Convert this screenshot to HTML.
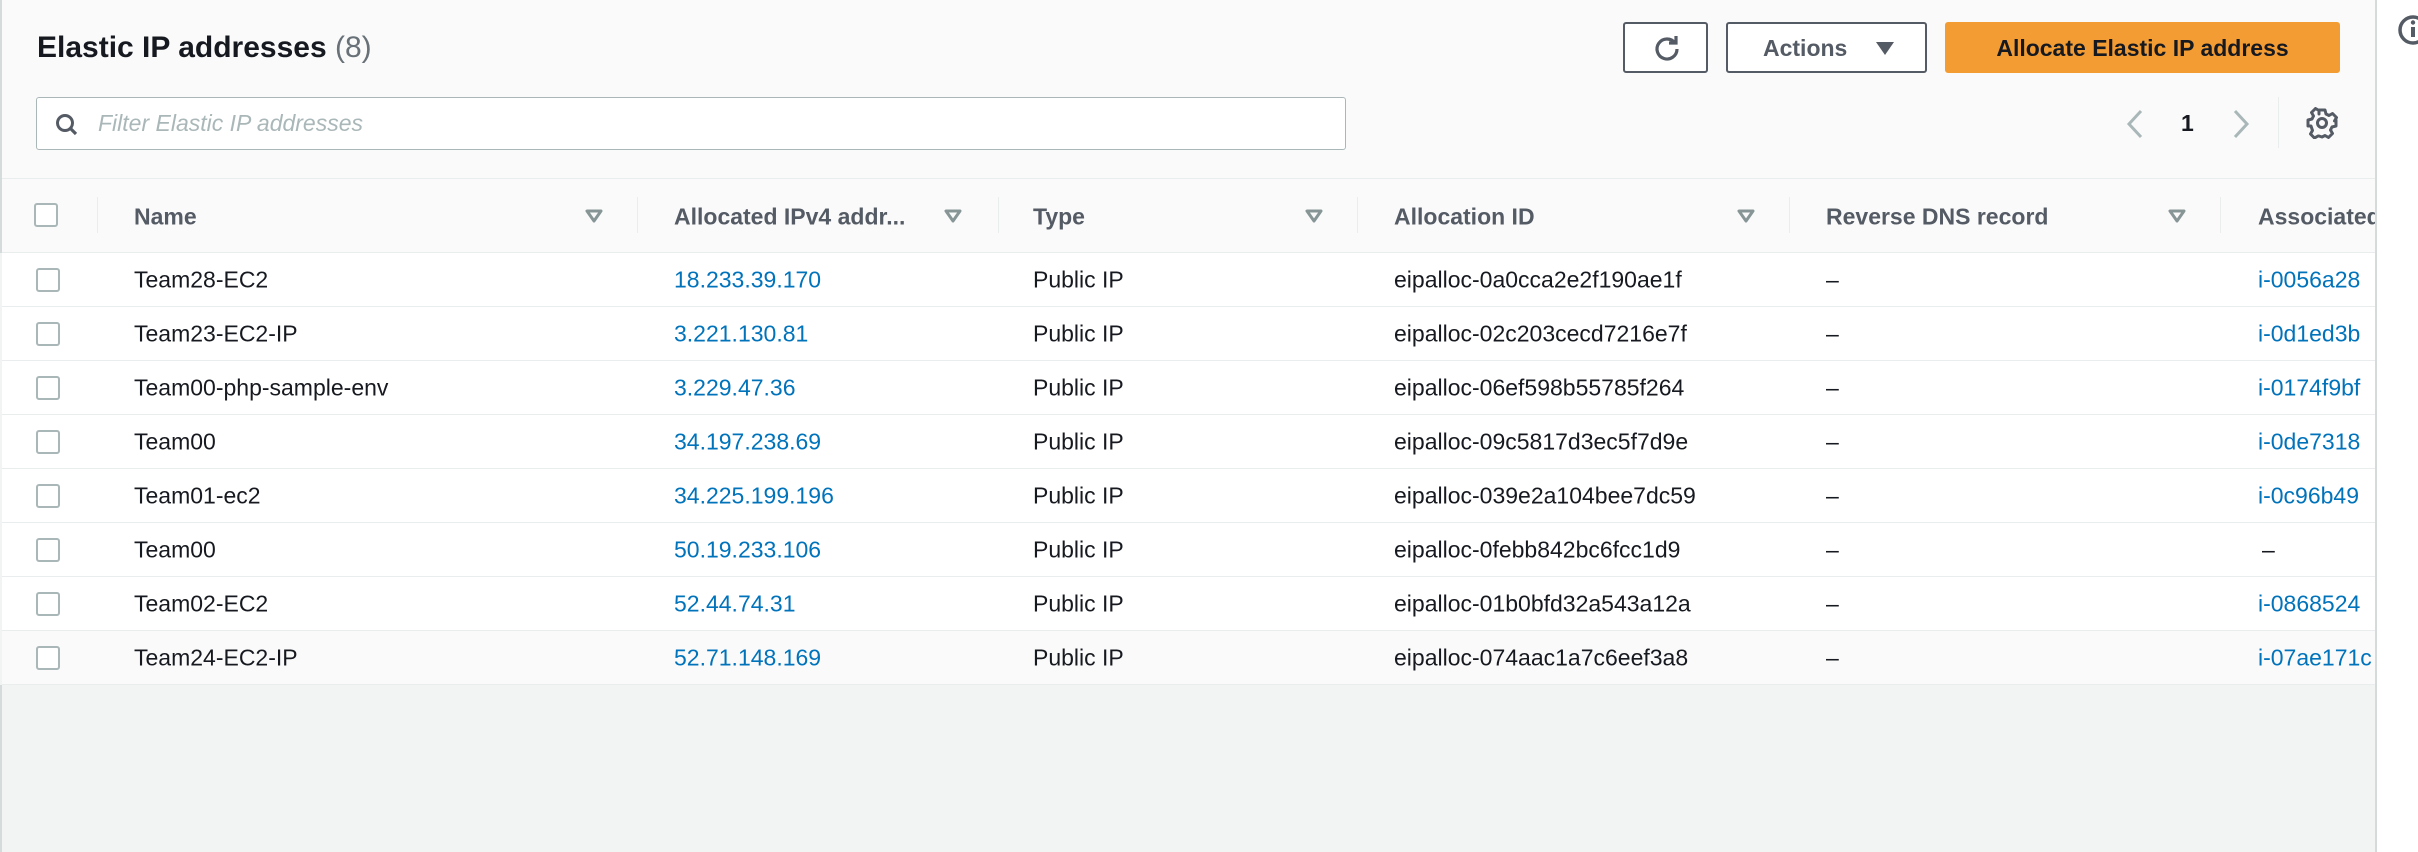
<!DOCTYPE html>
<html><head><meta charset="utf-8"><style>
*{margin:0;padding:0;box-sizing:border-box}
body{width:2418px;height:852px;overflow:hidden;background:#f2f3f3;font-family:"Liberation Sans",sans-serif;position:relative;color:#16191f}
.a{position:absolute;white-space:nowrap}
#top{position:absolute;left:0;top:0;width:2375px;height:253px;background:#fafafa;border-left:2px solid #d5dbdb}
#side{position:absolute;left:2375px;top:0;width:43px;height:852px;background:#fff;border-left:2px solid #d5dbdb;overflow:hidden}
.row{position:absolute;left:2px;width:2373px;height:54px;background:#fff;border-bottom:1px solid #eaeded;overflow:hidden}
.row .a{top:50%;transform:translateY(-50%);font-size:23px}
.cb{position:absolute;left:34px;top:15px;width:24px;height:24px;border:2px solid #aab7b8;border-radius:3px;background:#fff}
.lk{color:#0073bb}
.h{font-size:23px;font-weight:bold;color:#545b64;top:217px;transform:translateY(-50%)}
.sep{position:absolute;width:1px;background:#eaeded;top:197px;height:36px}
.tri{position:absolute;top:209px}
.btn{position:absolute;top:22px;height:51px;border:2px solid #545b64;border-radius:3px;background:#fff}
</style></head><body>
<div id="top"></div>
<div id="side"><svg style="position:absolute;left:19px;top:13px" width="40" height="36"><circle cx="17" cy="17" r="13" fill="none" stroke="#545b64" stroke-width="3.5"/><rect x="15" y="14" width="4" height="10" fill="#545b64"/><circle cx="17" cy="9.5" r="2.2" fill="#545b64"/></svg></div>

<div class="a" style="left:37px;top:31px;font-size:30px;font-weight:bold;color:#16191f">Elastic IP addresses <span style="font-weight:normal;color:#687078">(8)</span></div>

<div class="btn" style="left:1623px;width:85px"><svg style="position:absolute;left:28px;top:10px" width="28" height="28" viewBox="0 0 28 28"><path d="M22 9 A10 10 0 1 0 24 15" fill="none" stroke="#545b64" stroke-width="3.2"/><path d="M16 9 H23 V2" fill="none" stroke="#545b64" stroke-width="3.2"/></svg></div>
<div class="btn" style="left:1726px;width:201px"><span class="a" style="left:35px;top:11px;font-size:23px;font-weight:bold;color:#545b64">Actions</span><svg style="position:absolute;left:148px;top:18px" width="18" height="14"><path d="M0 0 H18 L9 13 Z" fill="#545b64"/></svg></div>
<div class="btn" style="left:1945px;width:395px;background:#f39c34;border-color:#f39c34"><span class="a" style="left:0;width:391px;text-align:center;top:11px;font-size:23px;font-weight:bold;color:#16191f">Allocate Elastic IP address</span></div>

<div style="position:absolute;left:36px;top:97px;width:1310px;height:53px;background:#fff;border:1px solid #aab7b8;border-radius:3px"></div>
<svg style="position:absolute;left:55px;top:113px" width="30" height="24"><circle cx="10" cy="10" r="7.5" fill="none" stroke="#545b64" stroke-width="3"/><path d="M15 15 L21 21" stroke="#545b64" stroke-width="3.2"/></svg>
<div class="a" style="left:98px;top:110px;font-size:23px;font-style:italic;color:#aab7b8">Filter Elastic IP addresses</div>

<svg style="position:absolute;left:2124px;top:108px" width="130" height="32"><path d="M17 3 L5 16 L17 29" fill="none" stroke="#aab7b8" stroke-width="3"/><path d="M111 3 L123 16 L111 29" fill="none" stroke="#aab7b8" stroke-width="3"/></svg>
<div class="a" style="left:2181px;top:110px;font-size:23px;font-weight:bold">1</div>
<div style="position:absolute;left:2278px;top:97px;width:1px;height:51px;background:#eaeded"></div>
<svg style="position:absolute;left:2306px;top:107px" width="32" height="32" viewBox="0 0 32 32"><path d="M13 3h6l1 4 3 1.5 3.5-2 4 4-2 3.5L30 13v6l-4 1-1.5 3 2 3.5-4 4-3.5-2L16 30h0l-3-1-1-0-3.5 2-4-4 2-3.5L5 19l-3-0v-6l4-1 1.5-3-2-3.5 4-4 3.5 2L13 7z" fill="none" stroke="#545b64" stroke-width="3" stroke-linejoin="round"/><circle cx="16" cy="16" r="4.5" fill="none" stroke="#545b64" stroke-width="3"/></svg>

<div style="position:absolute;left:2px;top:178px;width:2373px;height:1px;background:#eaeded"></div>
<div style="position:absolute;left:2px;top:252px;width:2373px;height:1px;background:#eaeded"></div>
<div style="position:absolute;left:34px;top:203px;width:24px;height:24px;border:2px solid #aab7b8;border-radius:3px;background:#fff"></div>
<div class="sep" style="left:97px"></div>
<div class="a h" style="left:134px">Name</div>
<div class="a h" style="left:674px">Allocated IPv4 addr...</div>
<div class="a h" style="left:1033px">Type</div>
<div class="a h" style="left:1394px">Allocation ID</div>
<div class="a h" style="left:1826px">Reverse DNS record</div>
<div class="a h" style="left:2258px;width:117px;overflow:hidden">Associated</div>
<div class="sep" style="left:637px"></div><div class="sep" style="left:998px"></div><div class="sep" style="left:1357px"></div><div class="sep" style="left:1789px"></div><div class="sep" style="left:2220px"></div>
<svg class="tri" style="left:585px" width="18" height="14"><path d="M2 2H16L9 12Z" fill="none" stroke="#879596" stroke-width="3" stroke-linejoin="round"/></svg>
<svg class="tri" style="left:944px" width="18" height="14"><path d="M2 2H16L9 12Z" fill="none" stroke="#879596" stroke-width="3" stroke-linejoin="round"/></svg>
<svg class="tri" style="left:1305px" width="18" height="14"><path d="M2 2H16L9 12Z" fill="none" stroke="#879596" stroke-width="3" stroke-linejoin="round"/></svg>
<svg class="tri" style="left:1737px" width="18" height="14"><path d="M2 2H16L9 12Z" fill="none" stroke="#879596" stroke-width="3" stroke-linejoin="round"/></svg>
<svg class="tri" style="left:2168px" width="18" height="14"><path d="M2 2H16L9 12Z" fill="none" stroke="#879596" stroke-width="3" stroke-linejoin="round"/></svg>

<div class="row" style="top:253px"><div class="cb"></div><span class="a" style="left:132px">Team28-EC2</span><span class="a lk" style="left:672px">18.233.39.170</span><span class="a" style="left:1031px">Public IP</span><span class="a" style="left:1392px">eipalloc-0a0cca2e2f190ae1f</span><span class="a" style="left:1824px">–</span><span class="a lk" style="left:2256px">i-0056a28</span></div>
<div class="row" style="top:307px"><div class="cb"></div><span class="a" style="left:132px">Team23-EC2-IP</span><span class="a lk" style="left:672px">3.221.130.81</span><span class="a" style="left:1031px">Public IP</span><span class="a" style="left:1392px">eipalloc-02c203cecd7216e7f</span><span class="a" style="left:1824px">–</span><span class="a lk" style="left:2256px">i-0d1ed3b</span></div>
<div class="row" style="top:361px"><div class="cb"></div><span class="a" style="left:132px">Team00-php-sample-env</span><span class="a lk" style="left:672px">3.229.47.36</span><span class="a" style="left:1031px">Public IP</span><span class="a" style="left:1392px">eipalloc-06ef598b55785f264</span><span class="a" style="left:1824px">–</span><span class="a lk" style="left:2256px">i-0174f9bf</span></div>
<div class="row" style="top:415px"><div class="cb"></div><span class="a" style="left:132px">Team00</span><span class="a lk" style="left:672px">34.197.238.69</span><span class="a" style="left:1031px">Public IP</span><span class="a" style="left:1392px">eipalloc-09c5817d3ec5f7d9e</span><span class="a" style="left:1824px">–</span><span class="a lk" style="left:2256px">i-0de7318</span></div>
<div class="row" style="top:469px"><div class="cb"></div><span class="a" style="left:132px">Team01-ec2</span><span class="a lk" style="left:672px">34.225.199.196</span><span class="a" style="left:1031px">Public IP</span><span class="a" style="left:1392px">eipalloc-039e2a104bee7dc59</span><span class="a" style="left:1824px">–</span><span class="a lk" style="left:2256px">i-0c96b49</span></div>
<div class="row" style="top:523px"><div class="cb"></div><span class="a" style="left:132px">Team00</span><span class="a lk" style="left:672px">50.19.233.106</span><span class="a" style="left:1031px">Public IP</span><span class="a" style="left:1392px">eipalloc-0febb842bc6fcc1d9</span><span class="a" style="left:1824px">–</span><span class="a" style="left:2260px">–</span></div>
<div class="row" style="top:577px"><div class="cb"></div><span class="a" style="left:132px">Team02-EC2</span><span class="a lk" style="left:672px">52.44.74.31</span><span class="a" style="left:1031px">Public IP</span><span class="a" style="left:1392px">eipalloc-01b0bfd32a543a12a</span><span class="a" style="left:1824px">–</span><span class="a lk" style="left:2256px">i-0868524</span></div>
<div class="row" style="top:631px;background:#fafafa"><div class="cb"></div><span class="a" style="left:132px">Team24-EC2-IP</span><span class="a lk" style="left:672px">52.71.148.169</span><span class="a" style="left:1031px">Public IP</span><span class="a" style="left:1392px">eipalloc-074aac1a7c6eef3a8</span><span class="a" style="left:1824px">–</span><span class="a lk" style="left:2256px">i-07ae171c</span></div>
<div style="position:absolute;left:0;top:685px;width:2px;height:167px;background:#d5dbdb"></div>
</body></html>
